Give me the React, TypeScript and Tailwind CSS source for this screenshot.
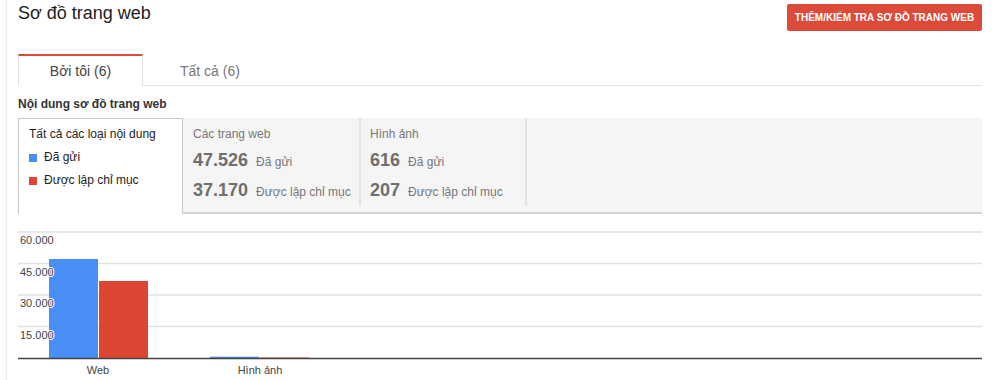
import React from "react";

const BLUE = "#4a8ff7";
const RED = "#dc4632";

function Chart() {
  const grid = [4, 35.5, 67, 98.5];
  const labels = ["60.000", "45.000", "30.000", "15.000"];
  const base = 130;
  return (
    <svg width={964} height={152} className="block" fontFamily="'Liberation Sans', Arial, sans-serif">
      {grid.map((y) => (
        <line key={y} x1={0} x2={964} y1={y} y2={y} stroke="#e2e2e2" strokeWidth={1.5} />
      ))}
      <rect x={31} y={31} width={49} height={base - 31} fill={BLUE} />
      <rect x={81} y={53} width={49} height={base - 53} fill={RED} />
      <rect x={192} y={base - 1.3} width={49} height={1.3} fill={BLUE} />
      <rect x={242} y={base - 0.5} width={49} height={0.5} fill={RED} />
      <line x1={0} x2={964} y1={base + 0.5} y2={base + 0.5} stroke="#444" strokeWidth={1.5} />
      {labels.map((l, i) => (
        <text
          key={l}
          x={2}
          y={grid[i] + 12}
          fontSize={11}
          fill="#444"
          stroke="#fff"
          strokeWidth={2}
          paintOrder="stroke"
        >
          {l}
        </text>
      ))}
      <text x={80} y={146} fontSize={11} fill="#444" textAnchor="middle">
        Web
      </text>
      <text x={242} y={146} fontSize={11} fill="#444" textAnchor="middle">
        Hình ảnh
      </text>
    </svg>
  );
}

function StatBox({ title, a, b, width }: { title: string; a: string; b: string; width: string }) {
  return (
    <div className={`${width} border-r-2 border-[#e2e2e2] pt-[8px]`}>
      <div className="text-[12px] leading-[16px] text-[#777]">{title}</div>
      <div className="mt-[4px] leading-[28px] whitespace-nowrap">
        <span className="text-[18px] font-bold text-[#6e6e6e]">{a}</span>
        <span className="ml-[8px] text-[12px] text-[#777]">Đã gửi</span>
      </div>
      <div className="leading-[28px] whitespace-nowrap">
        <span className="text-[18px] font-bold text-[#6e6e6e]">{b}</span>
        <span className="ml-[8px] text-[12px] text-[#777]">Được lập chỉ mục</span>
      </div>
    </div>
  );
}

export default function App() {
  return (
    <div className="w-[1000px] h-[380px] bg-white overflow-hidden">
      <div className="ml-[6px] h-full border-l border-[#ececec] pl-[11px] pr-[18px] font-['Liberation_Sans',Arial,sans-serif]">
        <div className="flex justify-between items-start h-[31px]">
          <h1 className="text-[18px] leading-[24px] text-[#222] pt-[1px]">Sơ đồ trang web</h1>
          <button className="mt-[4px] h-[27px] w-[195px] rounded-[2px] bg-[#dc4b39] text-white text-[10px] font-bold">
            THÊM/KIỂM TRA SƠ ĐỒ TRANG WEB
          </button>
        </div>

        <div className="mt-[23px] flex h-[32px] border-b border-[#e3e3e3]">
          <div className="w-[125px] h-[32px] -mb-px bg-white border-t-2 border-t-[#dd4b39] border-x border-x-[#e3e3e3] flex items-center justify-center text-[14px] text-[#444]">
            Bởi tôi (6)
          </div>
          <div className="ml-[5px] px-[32px] pt-[3px] flex items-center text-[14px] text-[#777]">Tất cả (6)</div>
        </div>

        <div className="mt-[10px] text-[12px] leading-[16px] font-bold text-[#333]">Nội dung sơ đồ trang web</div>

        <div className="mt-[6px] flex h-[96px] bg-[#f5f5f5] border-b-2 border-[#d4d4d4]">
          <div className="w-[165px] h-[96px] self-start bg-white border border-b-0 border-[#c8c8c8] pl-[10px] pt-[4px] text-[12px] leading-[23px] text-[#222]">
            <div>Tất cả các loại nội dung</div>
            <div className="flex items-center">
              <span className="w-[8px] h-[8px] mr-[7px]" style={{ background: BLUE }} />
              Đã gửi
            </div>
            <div className="flex items-center">
              <span className="w-[8px] h-[8px] mr-[7px]" style={{ background: RED }} />
              Được lập chỉ mục
            </div>
          </div>
          <div className="pl-[10px]">
            <StatBox width="w-[168px]" title="Các trang web" a="47.526" b="37.170" />
          </div>
          <div className="pl-[9px]">
            <StatBox width="w-[157px]" title="Hình ảnh" a="616" b="207" />
          </div>
        </div>

        <div className="mt-[14px]">
          <Chart />
        </div>
      </div>
    </div>
  );
}
